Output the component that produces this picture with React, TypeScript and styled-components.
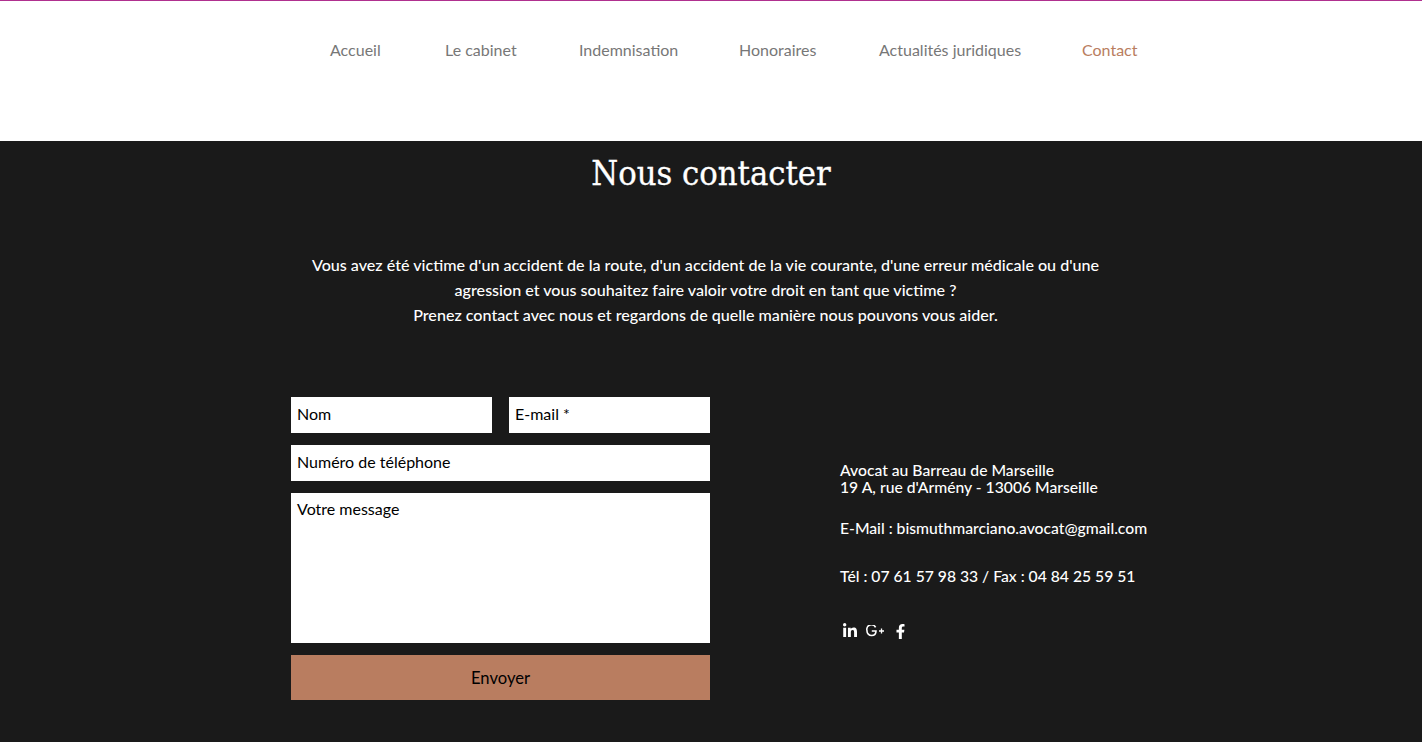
import styled, { createGlobalStyle } from "styled-components"
import { FaLinkedinIn, FaFacebookF } from "react-icons/fa"

const GlobalStyle = createGlobalStyle`
    html, body {
        margin: 0;
        padding: 0;
        background: #1a1a1a;
    }
    * {
        box-sizing: border-box;
    }
`

const FONT = `Lato, "Liberation Sans", sans-serif`

const links = [
    { label: "Accueil", width: 115 },
    { label: "Le cabinet", width: 134 },
    { label: "Indemnisation", width: 160 },
    { label: "Honoraires", width: 140 },
    { label: "Actualités juridiques", width: 203 },
    { label: "Contact", width: 60, active: true },
]

const GooglePlus = () => (
    <svg width="19" height="12" viewBox="0 0 19 12" fill="none" stroke="#fff" strokeWidth="1.6">
        <path d="M9.6 2.4A4.6 4.6 0 0 0 1 5.6a4.6 4.6 0 0 0 4.7 4.9c2.6 0 4.3-1.8 4.3-4.5H5.8" />
        <path d="M13 6h5M15.5 3.5v5" strokeWidth="1.3" />
    </svg>
)

const App = () => {
    return (
        <>
            <GlobalStyle />
            <Header>
                <Nav>
                    {links.map((link) => (
                        <NavLink key={link.label} href="#" $width={link.width} $active={link.active}>
                            {link.label}
                        </NavLink>
                    ))}
                </Nav>
            </Header>
            <Main>
                <Title>Nous contacter</Title>
                <Intro>
                    Vous avez été victime d'un accident de la route, d'un accident de la vie courante, d'une erreur médicale ou d'une
                    <br />
                    agression et vous souhaitez faire valoir votre droit en tant que victime ?
                    <br />
                    Prenez contact avec nous et regardons de quelle manière nous pouvons vous aider.
                </Intro>
                <Columns>
                    <Form onSubmit={(e) => e.preventDefault()}>
                        <FormRow>
                            <RowInput placeholder="Nom" />
                            <RowInput placeholder="E-mail *" />
                        </FormRow>
                        <Input placeholder="Numéro de téléphone" />
                        <TextArea placeholder="Votre message" />
                        <Button type="submit">Envoyer</Button>
                    </Form>
                    <Details>
                        <Address>
                            Avocat au Barreau de Marseille
                            <br />
                            19 A, rue d'Armény - 13006 Marseille
                        </Address>
                        <Email>E-Mail : bismuthmarciano.avocat@gmail.com</Email>
                        <Phone>Tél : 07 61 57 98 33 / Fax : 04 84 25 59 51</Phone>
                        <Socials>
                            <SocialLink href="#" aria-label="LinkedIn"><FaLinkedinIn size={16} /></SocialLink>
                            <SocialLink href="#" aria-label="Google Plus"><GooglePlus /></SocialLink>
                            <SocialLink href="#" aria-label="Facebook"><FaFacebookF size={15} /></SocialLink>
                        </Socials>
                    </Details>
                </Columns>
            </Main>
        </>
    )
}

export default App

const Header = styled.header`
    height: 141px;
    background: #fff;
    border-top: 1px solid #b0308f;
`

const Nav = styled.nav`
    display: flex;
    padding: 39px 0 0 330px;
`

const NavLink = styled.a<{ $width: number; $active?: boolean }>`
    flex: 0 0 ${(p) => p.$width}px;
    font: 400 16px/20px ${FONT};
    color: ${(p) => (p.$active ? "#b97d60" : "#777")};
    text-decoration: none;
`

const Main = styled.main`
    height: 601px;
    background: #1a1a1a;
    overflow: hidden;
`

const Title = styled.h1`
    margin: 8px 0 0;
    text-align: center;
    font: 400 34.2px/48px "DejaVu Serif Condensed", "DejaVu Serif", serif;
    -webkit-text-stroke: 0.3px #fff;
    color: #fff;
`

const Intro = styled.p`
    margin: 55px 0 0;
    padding-right: 11px;
    text-align: center;
    font: 500 16.1px/25px ${FONT};
    color: #fff;
`

const Columns = styled.div`
    display: flex;
    gap: 130px;
    margin-top: 70px;
    padding-left: 291px;
`

const Form = styled.form`
    display: flex;
    flex-direction: column;
    gap: 12px;
    width: 419px;
`

const FormRow = styled.div`
    display: flex;
    gap: 17px;
`

const Input = styled.input`
    height: 36px;
    padding: 0 6px 3px;
    border: 0;
    border-radius: 0;
    background: #fff;
    font: 400 16px ${FONT};
    color: #000;
    &::placeholder {
        color: #000;
        opacity: 1;
    }
`

const RowInput = styled(Input)`
    flex: 1;
    min-width: 0;
`

const TextArea = styled.textarea`
    display: block;
    height: 150px;
    padding: 7px 6px;
    border: 0;
    border-radius: 0;
    background: #fff;
    resize: none;
    font: 400 16px/18px ${FONT};
    color: #000;
    &::placeholder {
        color: #000;
        opacity: 1;
    }
`

const Button = styled.button`
    height: 45px;
    padding: 0;
    border: 0;
    background: #b97d60;
    font: 400 16.6px ${FONT};
    color: #000;
`

const Details = styled.div`
    padding-top: 65px;
    font: 500 15.7px/17px ${FONT};
    color: #fff;
`

const Address = styled.p`
    margin: 0;
`

const Email = styled.p`
    margin: 24px 0 0;
`

const Phone = styled.p`
    margin: 31px 0 0;
`

const Socials = styled.div`
    display: flex;
    align-items: center;
    gap: 8px;
    margin-top: 38px;
    padding-left: 2px;
`

const SocialLink = styled.a`
    display: flex;
    color: #fff;
`
